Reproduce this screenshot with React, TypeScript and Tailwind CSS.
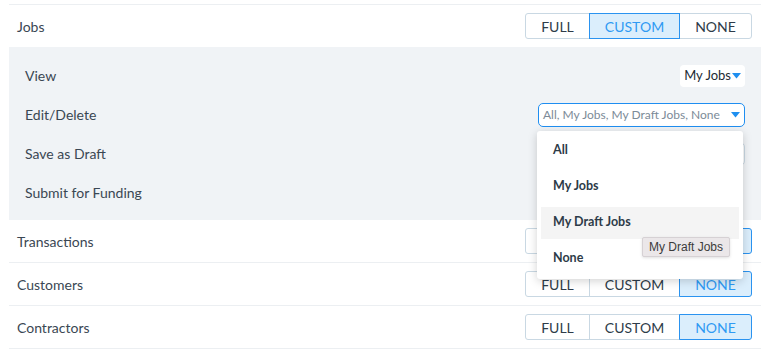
import React from "react";

type Sel = "FULL" | "CUSTOM" | "NONE";

function Caret() {
  return (
    <svg width="9" height="6" viewBox="0 0 9 6" className="shrink-0">
      <path d="M0 0 L9 0 L4.5 5.5 Z" fill="#1e8ff0" />
    </svg>
  );
}

function Toggle({ sel }: { sel: Sel }) {
  const cells: { k: Sel; w: string; extra: string }[] = [
    { k: "FULL", w: "w-[65px]", extra: "rounded-l-[3px]" },
    { k: "CUSTOM", w: "w-[91px] -ml-px", extra: "" },
    { k: "NONE", w: "w-[73px] -ml-px", extra: "rounded-r-[3px]" },
  ];
  return (
    <div className="flex h-[26px]">
      {cells.map((c) =>
        c.k === sel ? (
          <div
            key={c.k}
            className={`${c.w} ${c.extra} relative z-10 flex items-center justify-center border border-[#2a93f0] bg-[#dbeefc] text-[14px] text-[#2f9af3]`}
          >
            {c.k}
          </div>
        ) : (
          <div
            key={c.k}
            className={`${c.w} ${c.extra} flex items-center justify-center border border-[#c9d8e3] bg-white text-[14px] text-[#2e3c49]`}
          >
            {c.k}
          </div>
        )
      )}
    </div>
  );
}

function Row({ label, sel }: { label: string; sel: Sel }) {
  return (
    <div className="flex h-[43px] items-center justify-between border-b border-[#eceff2] pl-[8px] pr-[9px]">
      <span className="text-[14px] text-[#3a4753]">{label}</span>
      <Toggle sel={sel} />
    </div>
  );
}

export default function App() {
  return (
    <div
      className="h-[353px] w-[773px] bg-white pt-[4px]"
      style={{ fontFamily: "Lato, 'Noto Sans', sans-serif" }}
    >
      <div className="ml-[9px] w-[752px]">
        <div className="h-px bg-[#eceff2]" />
        <div className="flex h-[42px] items-center justify-between pl-[8px] pr-[9px]">
          <span className="text-[14px] text-[#3a4753]">Jobs</span>
          <Toggle sel="CUSTOM" />
        </div>
        <div className="bg-[#f0f3f6] pb-[8px] pl-[16px] pr-[16px] pt-[9px]">
          <div className="flex h-[39px] items-center justify-between">
            <span className="text-[14px] text-[#3a4753]">View</span>
            <div className="flex h-[22px] items-center gap-[1px] rounded-[4px] bg-white pl-[4px] pr-[4px]">
              <span className="text-[13px] text-[#222a33]">My Jobs</span>
              <Caret />
            </div>
          </div>
          <div className="flex h-[39px] items-center justify-between">
            <span className="text-[14px] text-[#3a4753]">Edit/Delete</span>
            <div className="relative">
              <div className="flex h-[24px] w-[207px] items-center justify-between rounded-[5px] border border-[#1f8ef1] bg-white pl-[4px] pr-[4px]">
                <span className="text-[12px] text-[#7c8b98]">All, My Jobs, My Draft Jobs, None</span>
                <Caret />
              </div>
              <div className="absolute left-[-1px] top-[28px] z-20 w-[206px] rounded-[3px] bg-white px-[4px] py-[4px] shadow-[0_2px_10px_rgba(0,0,0,0.18)]">
                {["All", "My Jobs", "My Draft Jobs", "None"].map((t, i) => (
                  <div
                    key={t}
                    className={`flex h-[32px] items-center pl-[12px] text-[12.5px] font-bold text-[#2d3b48] ${
                      i > 0 ? "mt-[4px]" : ""
                    } ${t === "My Draft Jobs" ? "bg-[#f4f4f4]" : ""}`}
                  >
                    {t}
                  </div>
                ))}
              </div>
              <div
                className="absolute left-[104px] top-[134px] z-30 flex h-[20px] items-center rounded-[2px] border border-[#d6d1d4] bg-[#ebe7e9] px-[6px] text-[12px] text-[#3b3b3b] shadow-[0_1px_3px_rgba(0,0,0,0.12)]"
                style={{ fontFamily: "'Liberation Sans', Arial, sans-serif" }}
              >
                My Draft Jobs
              </div>
            </div>
          </div>
          <div className="flex h-[39px] items-center justify-between">
            <span className="text-[14px] text-[#3a4753]">Save as Draft</span>
            <div className="h-[24px] w-[207px] rounded-[5px] border border-[#c9d8e3] bg-white" />
          </div>
          <div className="flex h-[39px] items-center justify-between">
            <span className="text-[14px] text-[#3a4753]">Submit for Funding</span>
          </div>
        </div>
        <Row label="Transactions" sel="NONE" />
        <Row label="Customers" sel="NONE" />
        <Row label="Contractors" sel="NONE" />
      </div>
    </div>
  );
}
